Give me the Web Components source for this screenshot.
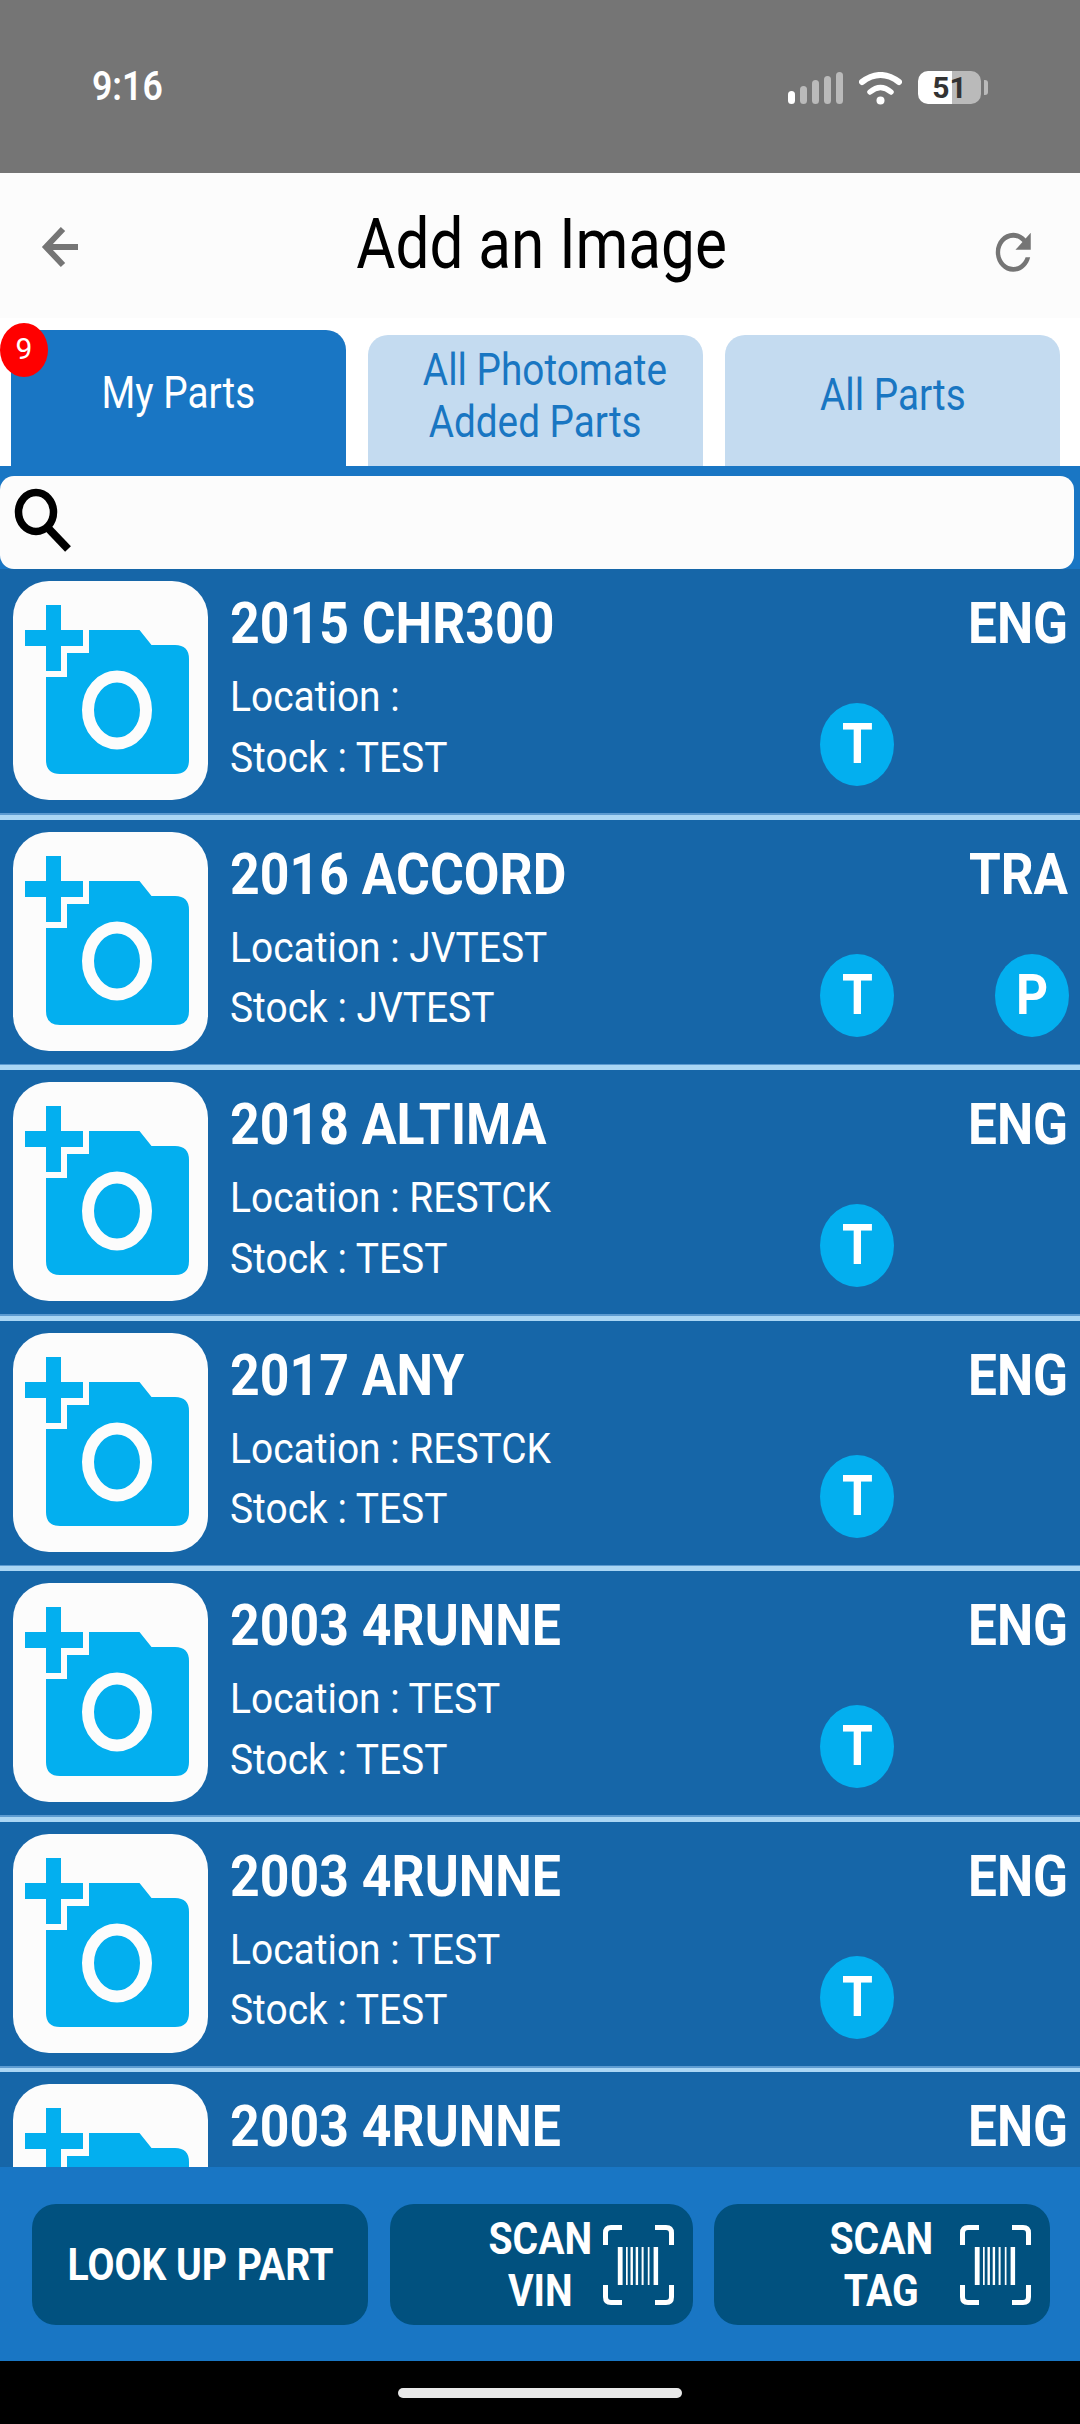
<!DOCTYPE html>
<html lang="en">
<head>
<meta charset="utf-8">
<title>Add an Image</title>
<style>
  html, body { margin: 0; padding: 0; background: #000; }
  body { font-family: Roboto, "Liberation Sans", sans-serif; }
</style>
</head>
<body>
<photo-app>
  <status-bar time="9:16" battery="51"></status-bar>
  <app-header>Add an Image</app-header>
  <tab-strip badge="9">
    <part-tab active>My Parts</part-tab>
    <part-tab><span style="padding-left:22px">All Photomate</span><br>Added Parts</part-tab>
    <part-tab>All Parts</part-tab>
  </tab-strip>
  <search-box></search-box>
  <part-list>
    <part-row name="2015 CHR300" kind="ENG" location="" stock="TEST" chips="T"></part-row>
    <part-row name="2016 ACCORD" kind="TRA" location="JVTEST" stock="JVTEST" chips="T P"></part-row>
    <part-row name="2018 ALTIMA" kind="ENG" location="RESTCK" stock="TEST" chips="T"></part-row>
    <part-row name="2017 ANY" kind="ENG" location="RESTCK" stock="TEST" chips="T"></part-row>
    <part-row name="2003 4RUNNE" kind="ENG" location="TEST" stock="TEST" chips="T"></part-row>
    <part-row name="2003 4RUNNE" kind="ENG" location="TEST" stock="TEST" chips="T"></part-row>
    <!-- this one is cut by the action bar, only the title shows -->
    <part-row name="2003 4RUNNE" kind="ENG"></part-row>
  </part-list>
  <action-bar>
    <action-button>LOOK UP PART</action-button>
    <action-button scan gap="12">SCAN<br>VIN</action-button>
    <action-button scan gap="28">SCAN<br>TAG</action-button>
  </action-bar>
  <home-bar></home-bar>
</photo-app>

<script>
// the reference is squeezed horizontally, so text gets a scaleX on top of Roboto
const SQUEEZE = 0.89;

class PhotoApp extends HTMLElement {
  constructor() {
    super();
    this.attachShadow({ mode: 'open' }).innerHTML = `
      <style>
        :host { display: flex; flex-direction: column; width: 1080px; height: 2424px; overflow: hidden; }
      </style>
      <slot></slot>`;
  }
}

class StatusBar extends HTMLElement {
  constructor() {
    super();
    const bars = [[0, 13, '#fff'], [12, 18, '#bababa'], [24, 24, '#bababa'], [36, 28, '#bababa'], [48, 32, '#bababa']]
      .map(([x, h, c]) => `<rect x="${x}" y="${32 - h}" width="7" height="${h}" rx="3.5" fill="${c}"/>`)
      .join('');
    this.attachShadow({ mode: 'open' }).innerHTML = `
      <style>
        :host { display: flex; align-items: flex-start; flex: none; height: 173px; background: #757575;
                padding: 71px 92px 0 92px; box-sizing: border-box; color: #fff; }
        .time { font: 600 40px/32px Roboto, sans-serif; width: 71px; white-space: nowrap; }
        .time span { display: inline-block; transform: scaleX(.89); transform-origin: left; }
        .right { margin-left: auto; display: flex; align-items: flex-start; }
        .batt { position: relative; width: 63px; height: 33px; border-radius: 10px; margin-left: 16px;
                background: linear-gradient(90deg, #fff 0 34px, #bababa 34px); color: #333;
                display: flex; align-items: center; justify-content: center;
                font: 700 30px/33px Roboto, sans-serif; }
        .cap { width: 4px; height: 15px; margin: 9px 0 0 3px; background: #bababa; border-radius: 0 3px 3px 0; }
      </style>
      <div class="time"><span>${this.getAttribute('time')}</span></div>
      <div class="right">
        <svg width="55" height="33" viewBox="0 0 55 33" style="margin-top:1px;margin-right:16px">${bars}</svg>
        <svg width="43" height="33" viewBox="0 0 43 33" style="margin-top:1px" fill="none" stroke="#fff" stroke-linecap="round">
          <path d="M3 10Q21.5 -4 40 10" stroke-width="6"/>
          <path d="M11 20Q21.5 11 32 20" stroke-width="5.5"/>
          <circle cx="21.5" cy="28.5" r="4" fill="#fff" stroke="none"/>
        </svg>
        <div class="batt">${this.getAttribute('battery')}</div>
        <div class="cap"></div>
      </div>`;
  }
}

class AppHeader extends HTMLElement {
  constructor() {
    super();
    this.attachShadow({ mode: 'open' }).innerHTML = `
      <style>
        :host { display: flex; flex: none; height: 145px; background: #fcfcfc; align-items: flex-start;
                padding: 44px 41px 0 34px; box-sizing: border-box; color: #000; }
        h1 { flex: 1; margin: -3px 0 0; text-align: center; font: 400 70px/60px Roboto, sans-serif; padding-left: 8px; }
        h1 span { display: inline-block; transform: scaleX(.86); white-space: nowrap; }
        svg { flex: none; fill: #757575; }
      </style>
      <svg width="54" height="60" viewBox="0 0 54 60" style="fill:none;stroke:#757575;stroke-width:6"><path d="M44 30H12M29 12L12 30L29 48"/></svg>
      <h1><span><slot></slot></span></h1>
      <svg width="52.5" height="58.5" viewBox="0 0 24 24" preserveAspectRatio="none" style="margin-top:6px"><path d="M17.65 6.35C16.2 4.9 14.21 4 12 4c-4.42 0-7.99 3.58-7.99 8s3.57 8 7.99 8c3.73 0 6.84-2.55 7.73-6h-2.08c-.82 2.33-3.04 4-5.65 4-3.31 0-6-2.69-6-6s2.69-6 6-6c1.66 0 3.14.69 4.22 1.78L13 11h7V4l-2.35 2.35z"/></svg>`;
  }
}

class TabStrip extends HTMLElement {
  constructor() {
    super();
    this.attachShadow({ mode: 'open' }).innerHTML = `
      <style>
        :host { display: flex; flex: none; position: relative; height: 148px; background: #fff;
                align-items: flex-end; gap: 22px; padding-left: 11px; box-sizing: border-box; }
        .badge { position: absolute; left: 0; top: 5px; width: 48px; height: 54px; border-radius: 50%;
                 background: #f00; color: #fff; font: 400 30px/52px Roboto, sans-serif; text-align: center; }
      </style>
      <slot></slot>
      <div class="badge">${this.getAttribute('badge')}</div>`;
  }
}

class PartTab extends HTMLElement {
  constructor() {
    super();
    this.attachShadow({ mode: 'open' }).innerHTML = `
      <style>
        :host { display: flex; align-items: center; justify-content: center; width: 335px; height: 131px;
                box-sizing: border-box; padding-bottom: 7px; border-radius: 20px 20px 0 0;
                background: #c4dbf0; color: #1976c2; font: 400 43.5px/52px Roboto, sans-serif; text-align: center; }
        :host([active]) { height: 136px; background: #1976c4; color: #fff; padding-bottom: 9px; }
        :host(:last-of-type) { padding-bottom: 9px; }
        .txt { display: inline-block; transform: scaleX(${SQUEEZE}); white-space: nowrap; }
      </style>
      <span class="txt"><slot></slot></span>`;
  }
}

class SearchBox extends HTMLElement {
  constructor() {
    super();
    this.attachShadow({ mode: 'open' }).innerHTML = `
      <style>
        :host { display: block; flex: none; height: 103px; padding: 10px 6px 0 0; box-sizing: border-box; background: #1976c4; }
        .field { height: 93px; background: #fcfcfc; border-radius: 14px; display: flex; align-items: flex-start; }
        svg { margin: 10px 0 0 12px; }
      </style>
      <div class="field">
        <svg width="64" height="72" viewBox="0 0 64 72" fill="none" stroke="#000" stroke-width="7.500">
          <ellipse cx="24" cy="26" rx="17.500" ry="19.500" fill="none"/>
          <path d="M36 42L56 63" stroke-width="8"/>
        </svg>
      </div>`;
  }
}

class PartList extends HTMLElement {
  constructor() {
    super();
    this.attachShadow({ mode: 'open' }).innerHTML = `
      <style>
        :host { display: block; flex: 1 1 0; min-height: 0; overflow: hidden; background: #1666a8; }
      </style>
      <slot></slot>`;
  }
}

const CAMERA = `
  <svg viewBox="0 0 195 219" width="195" height="219">
    <rect width="195" height="219" rx="36" ry="36" fill="#fcfcfc"/>
    <g fill="#03afef">
      <path d="M76 49H126.500L138.500 64H162Q176 64 176 78V179Q176 193 162 193H47Q33 193 33 179V96H54V72H76Z"/>
      <path d="M33 24H48V49H70V65H48V90H33V65H12V49H33Z"/>
    </g>
    <ellipse cx="104" cy="129" rx="29" ry="33.500" fill="none" stroke="#fcfcfc" stroke-width="12"/>
  </svg>`;

class PartRow extends HTMLElement {
  constructor() {
    super();
    const attr = (n) => this.getAttribute(n) ?? '';
    const chips = attr('chips').split(' ');
    const cell = (c) => c ? `<span class="chip"><b>${c}</b></span>` : '<span class="chip none"></span>';
    const lines = this.hasAttribute('stock') ? `
          <div class="lines">
            <div>Location : ${attr('location')}</div>
            <div>Stock : ${attr('stock')}</div>
          </div>
          <div class="chips">${cell(chips[0])}${cell(chips[1])}</div>` : '';
    this.attachShadow({ mode: 'open' }).innerHTML = `
      <style>
        :host { display: block; height: 250.55px; color: #fff; }
        .row { display: flex; height: 244px; box-sizing: border-box; padding: 12px 12px 0 13px; overflow: hidden; }
        .thumb { flex: none; width: 195px; height: 219px; }
        .info { flex: 1; min-width: 0; display: grid; grid-template-columns: 1fr auto; grid-template-rows: 80px 1fr; margin-left: 22px; }
        .name, .kind { font: 700 58px/84px Roboto, sans-serif; white-space: nowrap; }
        .name { transform: scaleX(.893); transform-origin: left; width: max-content; }
        .kind { transform: scaleX(.885); transform-origin: right; justify-self: end; }
        .lines { font: 400 43px/60.5px Roboto, sans-serif; white-space: nowrap; padding-top: 5px; }
        .lines div { transform: scaleX(.905); transform-origin: left; width: max-content; height: 60.5px; }
        .chips { display: flex; gap: 101px; align-items: flex-start; padding-top: 42px; margin-right: -1px; }
        .chip { width: 74px; height: 83px; border-radius: 50%; background: #03afef; display: flex;
                align-items: center; justify-content: center; font: 700 56px/83px Roboto, sans-serif; }
        .chip.none { background: none; }
        .chip b { font-weight: 700; display: block; transform: scaleX(${SQUEEZE}); }
        .divider { height: 6.55px; background: linear-gradient(#5c9bd1 0 1.5px, #aad6f4 1.5px); }
      </style>
      <div class="row">
        <div class="thumb">${CAMERA}</div>
        <div class="info">
          <div class="name">${attr('name')}</div>
          <div class="kind">${attr('kind')}</div>${lines}
        </div>
      </div>
      <div class="divider"></div>`;
  }
}

class ActionBar extends HTMLElement {
  constructor() {
    super();
    this.attachShadow({ mode: 'open' }).innerHTML = `
      <style>
        :host { display: flex; flex: none; height: 194px; box-sizing: border-box; padding: 37px 30px 0 32px;
                gap: 21.500px; background: #1976c4; align-items: flex-start; }
      </style>
      <slot></slot>`;
  }
}

const BARCODE = `
  <svg width="71" height="80" viewBox="0 0 71 80" fill="none" stroke="#fff" stroke-width="5">
    <path d="M19 2.500H8Q2.500 2.500 2.500 8V20M52 2.500H63Q68.500 2.500 68.500 8V20M19 77.500H8Q2.500 77.500 2.500 72V60M52 77.500H63Q68.500 77.500 68.500 72V60"/>
    <g fill="#fff" stroke="none">
      <rect x="14.800" y="22" width="4.800" height="38"/><rect x="23" y="22" width="1.700" height="38"/>
      <rect x="27.500" y="22" width="2.400" height="38"/><rect x="32.700" y="22" width="2.400" height="38"/>
      <rect x="38.600" y="22" width="2" height="38"/><rect x="44.800" y="22" width="1.700" height="38"/>
      <rect x="50.600" y="22" width="4.500" height="38"/>
    </g>
  </svg>`;

class ActionButton extends HTMLElement {
  constructor() {
    super();
    const scan = this.hasAttribute('scan');
    const gap = this.getAttribute('gap') ?? 0;
    this.attachShadow({ mode: 'open' }).innerHTML = `
      <style>
        :host { display: flex; align-items: center; justify-content: ${scan ? 'flex-end' : 'center'};
                width: ${scan ? 303 : 336}px; height: 121px; box-sizing: border-box; padding: ${scan ? '0 19px 0 0' : '0'};
                gap: ${gap}px; background: #01517f; border-radius: 24px; color: #fff;
                font: 700 44px/52px Roboto, sans-serif; text-align: center; }
        :host(:last-child) { width: 336px; }
        .label { white-space: nowrap; }
        .label span { display: inline-block; transform: scaleX(.89); }
        .wrap { ${scan ? 'width: 101px; display:flex; justify-content:center;' : ''} }
        svg { flex: none; }
      </style>
      <div class="wrap"><div class="label"><span><slot></slot></span></div></div>
      ${scan ? BARCODE : ''}`;
  }
}

class HomeBar extends HTMLElement {
  constructor() {
    super();
    this.attachShadow({ mode: 'open' }).innerHTML = `
      <style>
        :host { display: flex; flex: none; height: 63px; background: #000; justify-content: center; padding-top: 27px; box-sizing: border-box; }
        div { width: 284px; height: 10px; border-radius: 5px; background: #e8e8e8; }
      </style>
      <div></div>`;
  }
}

customElements.define('photo-app', PhotoApp);
customElements.define('status-bar', StatusBar);
customElements.define('app-header', AppHeader);
customElements.define('tab-strip', TabStrip);
customElements.define('part-tab', PartTab);
customElements.define('search-box', SearchBox);
customElements.define('part-list', PartList);
customElements.define('part-row', PartRow);
customElements.define('action-bar', ActionBar);
customElements.define('action-button', ActionButton);
customElements.define('home-bar', HomeBar);
</script>
</body>
</html>
